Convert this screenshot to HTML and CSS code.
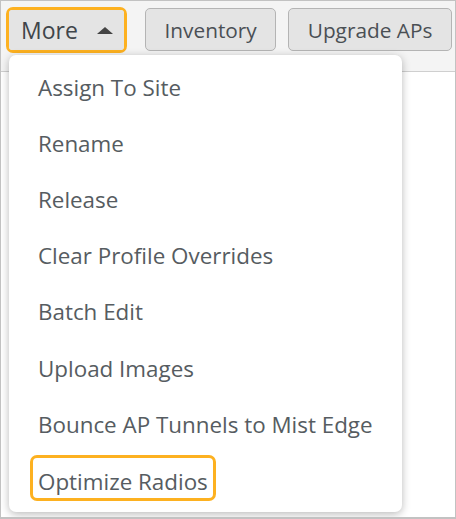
FILE: index.html
```html
<!DOCTYPE html>
<html>
<head>
<meta charset="utf-8">
<link rel="stylesheet" href="styles.css">
</head>
<body>
<div class="frame">
  <div class="toolbar">
    <div class="highlight more-wrap">
      <button class="btn more">More <span class="caret"></span></button>
    </div>
    <button class="btn">Inventory</button>
    <button class="btn">Upgrade APs</button>
  </div>
  <div class="content"></div>
  <ul class="menu">
    <li>Assign To Site</li>
    <li>Rename</li>
    <li>Release</li>
    <li>Clear Profile Overrides</li>
    <li>Batch Edit</li>
    <li>Upload Images</li>
    <li>Bounce AP Tunnels to Mist Edge</li>
    <li><span class="item-hl">Optimize Radios</span></li>
  </ul>
</div>
</body>
</html>
```
FILE: styles.css
```css
html, body {
  margin: 0;
  padding: 0;
  background: #fff;
}
.frame {
  position: relative;
  width: 456px;
  height: 519px;
  box-sizing: border-box;
  border: 1px solid #c2c2c2;
  border-bottom-width: 2px;
  font-family: "Open Sans", "Noto Sans", sans-serif;
  overflow: hidden;
}
.toolbar {
  height: 71px;
  box-sizing: border-box;
  background: #f4f4f4;
  border-bottom: 1px solid #cfcfcf;
  display: flex;
  align-items: flex-start;
  gap: 12px;
  padding: 6px 0 0 5px;
}
.btn {
  font-family: "Open Sans", "Noto Sans", sans-serif;
  font-size: 20.8px;
  color: #4a4f54;
  background: #e4e4e4;
  border: 1px solid #b4b4b4;
  border-radius: 5px;
  height: 43px;
  padding: 0 18.5px;
  display: flex;
  align-items: center;
  margin-top: 1px;
}
.highlight {
  border: 3px solid #fdb120;
  border-radius: 7px;
}
.more-wrap {
  margin-right: 6px;
}
.btn.more {
  font-size: 23px;
  border: none;
  border-radius: 3px;
  height: 40px;
  margin: 0;
  padding: 0 8px 0 12px;
  color: #3f454a;
  width: 115px;
  justify-content: space-between;
}
.caret {
  width: 0;
  height: 0;
  border-left: 8px solid transparent;
  border-right: 8px solid transparent;
  border-bottom: 7px solid #444;
  margin-right: 3px;
  margin-top: 1px;
}
.menu {
  position: absolute;
  left: 8px;
  top: 54px;
  width: 393px;
  height: 457px;
  box-sizing: border-box;
  margin: 0;
  padding: 4px 0 0 0;
  list-style: none;
  background: #fff;
  border-radius: 7px;
  box-shadow: 0 2px 8px rgba(0,0,0,0.28);
}
.menu li {
  height: 56.2px;
  display: flex;
  align-items: center;
  padding-left: 29px;
  font-size: 22.4px;
  color: #565c61;
  white-space: nowrap;
}
.item-hl {
  align-self: flex-start;
  margin-top: 3px;
  border: 3px solid #fdb120;
  border-radius: 7px;
  margin-left: -8px;
  padding: 7px 5px 0 5px;
  line-height: 33px;
}
```
